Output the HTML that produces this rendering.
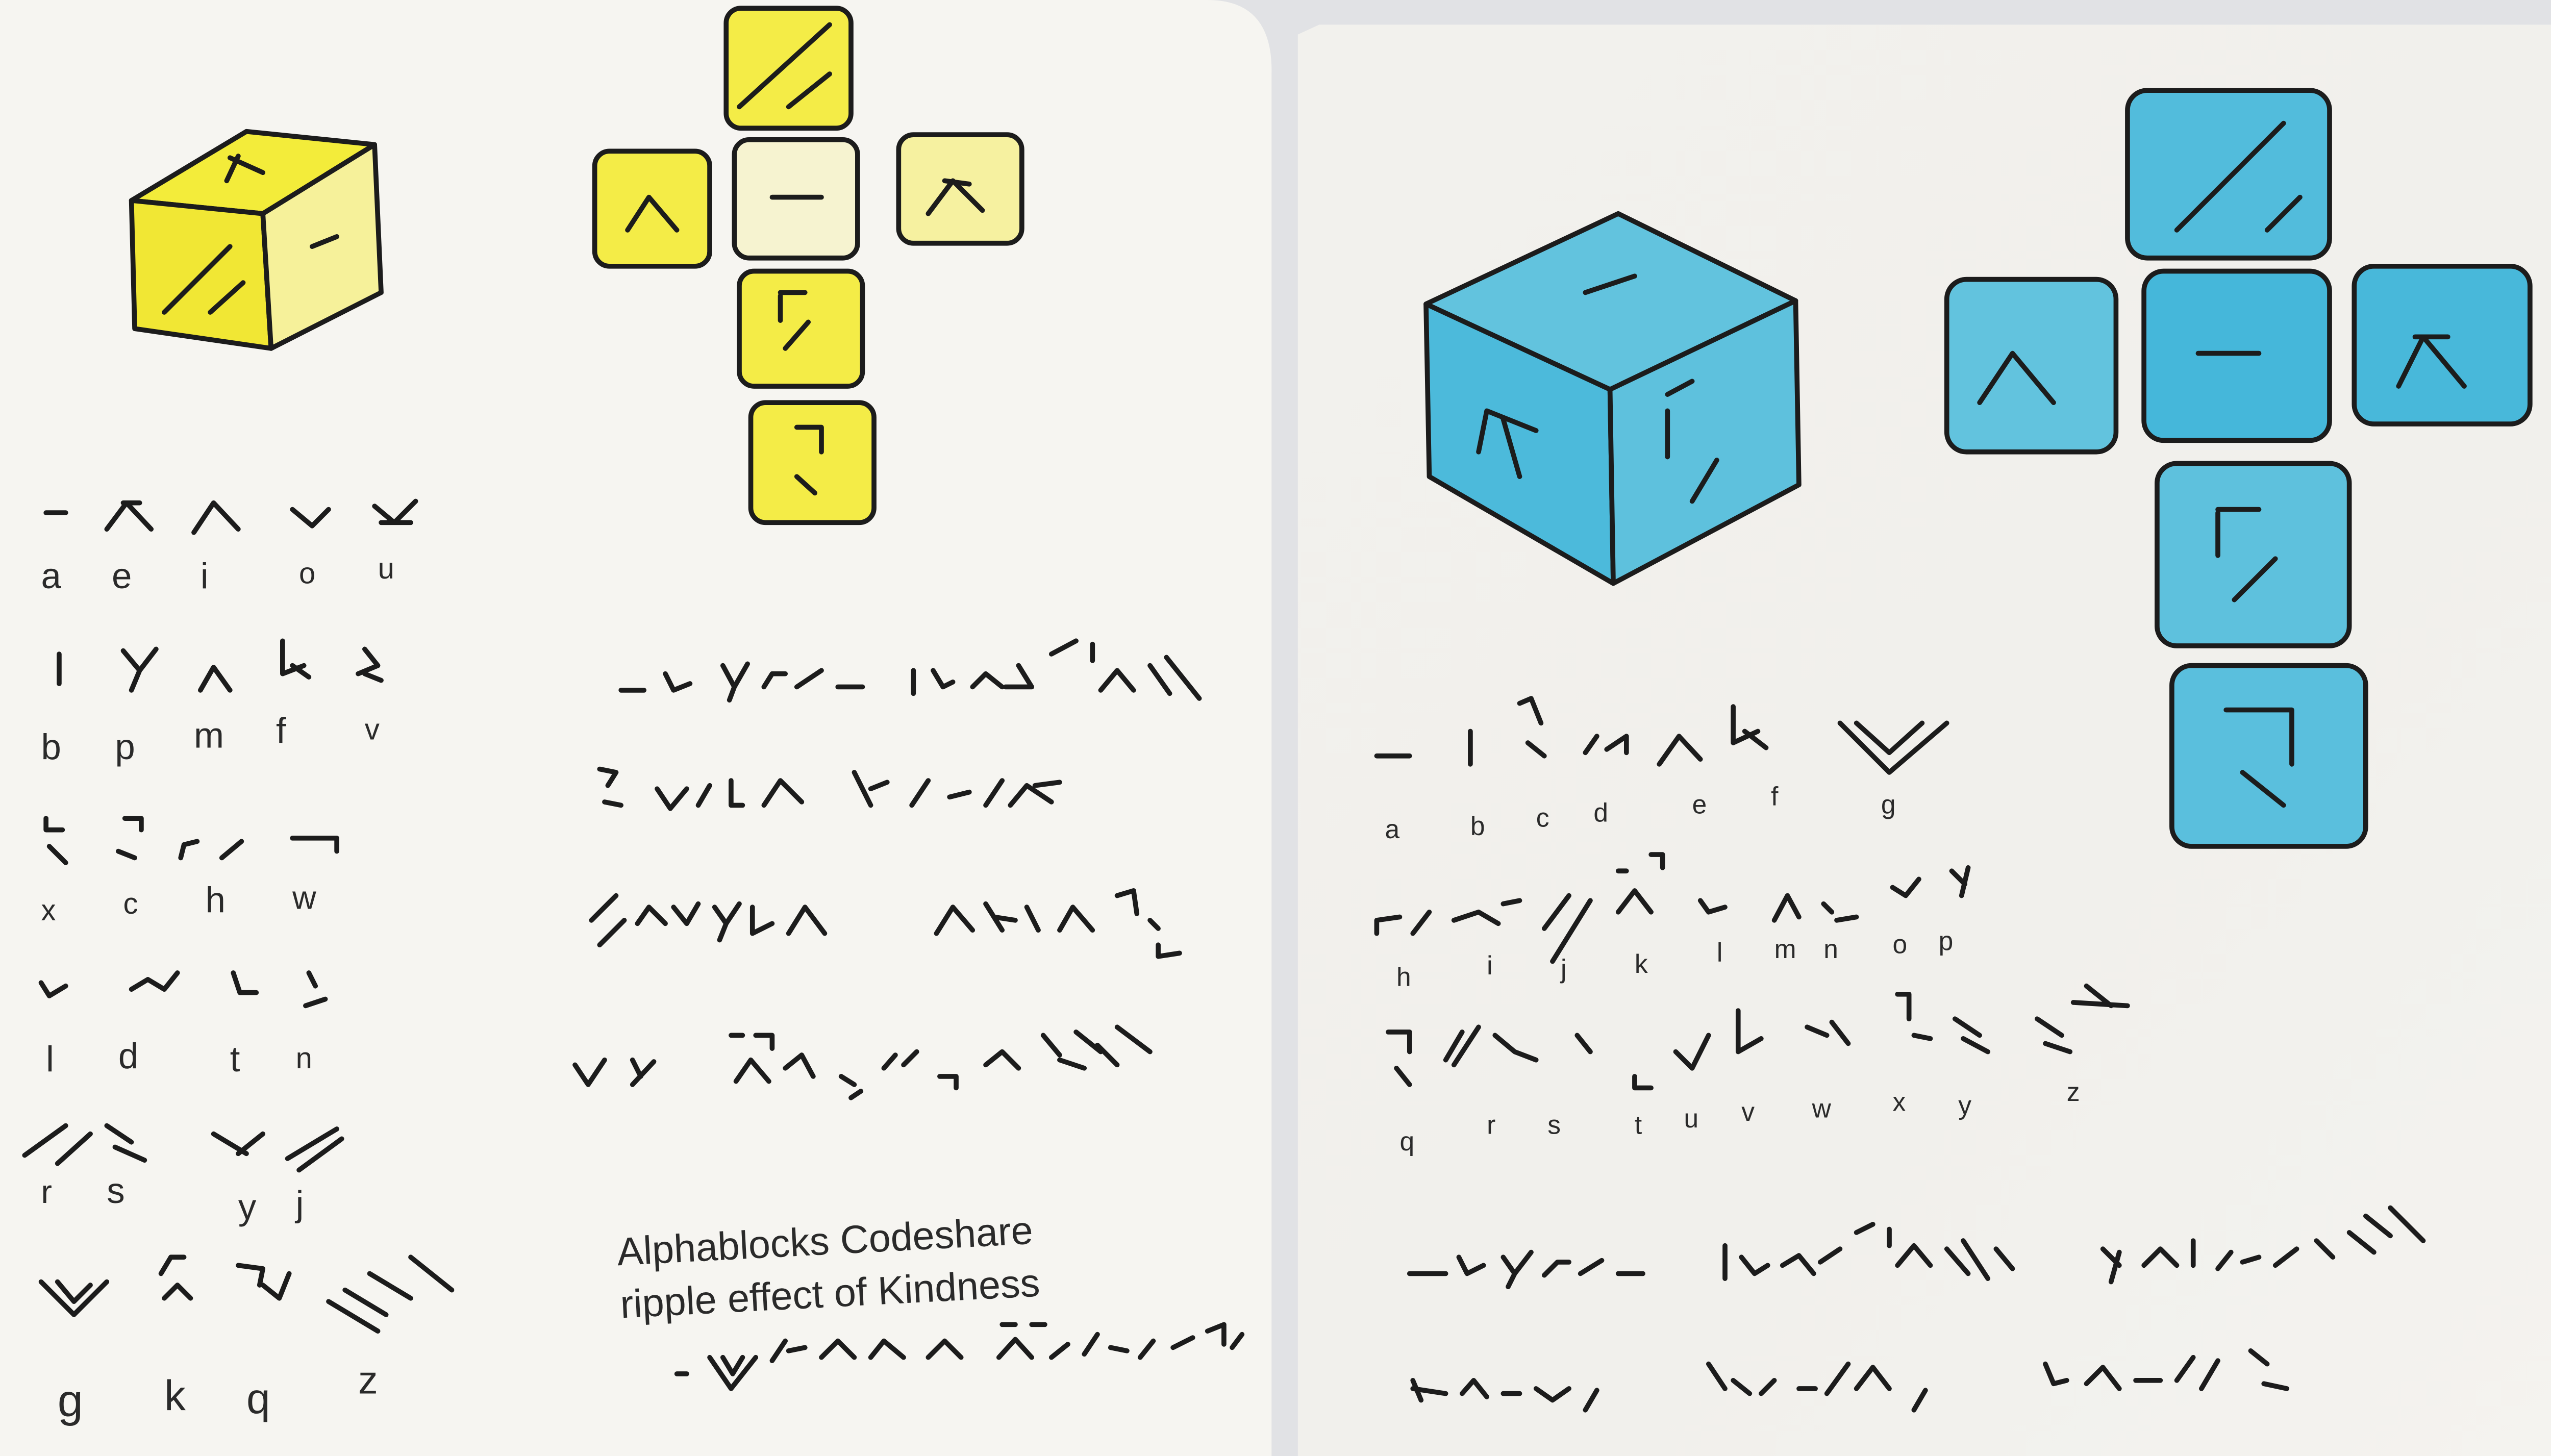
<!DOCTYPE html>
<html><head><meta charset="utf-8"><style>
html,body{margin:0;padding:0;background:#e1e2e5;}
svg{display:block;}
text{font-family:"Liberation Sans",sans-serif;fill:#2a2a2a;}
</style></head><body>
<svg width="5049" height="2854" viewBox="0 0 1568 886" preserveAspectRatio="none" xmlns="http://www.w3.org/2000/svg">
<defs>
<linearGradient id="rp" x1="0" y1="0" x2="1" y2="1">
<stop offset="0" stop-color="#f2f1ed"/><stop offset="0.6" stop-color="#f1f0ec"/><stop offset="1" stop-color="#f4f3ef"/></linearGradient>
</defs>
<rect width="1568" height="886" fill="#e1e2e5"/>
<path d="M0 0 H735 Q775 0 774 45 V886 H0 Z" fill="#f6f5f1"/>
<path d="M790 21 L803 15 H1568 V886 H790 Z" fill="url(#rp)"/>
<g stroke="#1c1c1c" stroke-width="3" stroke-linecap="round" stroke-linejoin="round" fill="none">
<path d="M80 122 L150 80 L228 88 L160 130 Z" fill="#f3ec3a"/>
<path d="M80 122 L160 130 L165 212 L82 200 Z" fill="#f1e734"/>
<path d="M160 130 L228 88 L232 178 L165 212 Z" fill="#f6f19a"/>
<path d="M145 95 L138 110 M140 96 L160 105 M100 190 L140 150 M128 190 L148 172 M190 150 L205 144"/>
<g fill="#f4ec47">
<rect x="442" y="5" width="76" height="73" rx="9"/>
<rect x="362" y="92" width="70" height="70" rx="9"/>
<rect x="447" y="85" width="75" height="72" rx="9" fill="#f6f3d0"/>
<rect x="547" y="82" width="75" height="66" rx="9" fill="#f6f1a0"/>
<rect x="450" y="165" width="75" height="70" rx="9"/>
<rect x="457" y="245" width="75" height="73" rx="9"/>
</g>
<path d="M450 65 L505 15 M480 65 L505 45 M382 140 L395 120 L412 140 M470 120 L500 120 M565 130 L580 110 L598 128 M575 110 L590 112 M475 180 V195 M475 178 H490 M478 212 L492 196 M485 260 H500 V275 M485 290 L496 300"/>
<path d="M868 185 L985 130 L1093 183 L980 237 Z" fill="#62c3de"/>
<path d="M868 185 L980 237 L982 355 L870 290 Z" fill="#4cbadb"/>
<path d="M980 237 L1093 183 L1095 295 L982 355 Z" fill="#5ec1dd"/>
<path d="M965 178 L995 168 M900 275 L905 250 L935 262 M915 255 L925 290 M1015 250 V278 M1015 240 L1030 232 M1030 305 L1045 280"/>
<g fill="#52bcdc">
<rect x="1295" y="55" width="123" height="102" rx="12"/>
<rect x="1185" y="170" width="103" height="105" rx="12" fill="#62c3de"/>
<rect x="1305" y="165" width="113" height="103" rx="12" fill="#45b7da"/>
<rect x="1433" y="162" width="107" height="96" rx="12" fill="#48b8da"/>
<rect x="1313" y="282" width="117" height="111" rx="12" fill="#5ec1dd"/>
<rect x="1322" y="405" width="118" height="110" rx="12" fill="#5abfdd"/>
</g>
<path d="M1325 140 L1390 75 M1380 140 L1400 120 M1205 245 L1225 215 L1250 245 M1338 215 H1375 M1460 235 L1475 205 L1500 235 M1470 205 H1490 M1350 312 V338 M1350 310 H1375 M1360 365 L1385 340 M1355 432 H1395 V465 M1365 470 L1390 490"/>
<path d="M28 312 H40 M65 322 L77 306 L92 322 M75 306 H85 M118 324 L130 306 L145 322 M178 310 L190 320 L200 310 M228 308 L240 318 L253 305 M232 318 H250"/>
<path d="M36 398 V416 M75 396 L85 408 L95 395 M85 408 L80 420 M122 420 L130 406 L140 420 M172 390 V410 L185 405 M178 405 L188 412 M222 395 L230 405 L218 410 M222 410 L232 414"/>
<path d="M28 498 V505 H38 M30 515 L40 525 M76 498 H86 V505 M72 518 L82 522 M110 522 L112 514 L120 512 M135 522 L147 512 M178 510 H205 V518"/>
<path d="M25 598 L30 606 L40 600 M80 602 L90 596 L100 602 L108 592 M142 592 L146 604 H156 M188 592 L192 600 M186 612 L198 608"/>
<path d="M15 703 L40 685 M35 708 L55 690 M65 685 L80 695 M70 698 L88 706 M130 690 L150 702 M145 702 L160 690 M175 705 L205 687 M182 712 L208 693"/>
<path d="M25 780 L45 800 L65 780 M35 780 L45 792 L55 782 M98 775 L104 765 H112 M100 790 L108 782 L116 790 M145 770 L160 772 L158 782 M160 782 L170 790 L176 775 M200 792 L230 810 M210 785 L235 800 M225 775 L250 790 M250 765 L275 785"/>
<path d="M378 420 H392 M405 410 L410 420 L420 416 M440 405 L447 418 L455 404 M447 418 L444 426 M465 418 L470 410 L478 410 M485 418 L500 408 M510 418 H525 M556 408 V422 M568 408 L574 418 L580 415 M592 418 L600 410 L610 418 M620 405 L628 418 L612 418 M640 398 L655 390 M665 392 V402 M670 420 L680 408 L690 420 M700 405 L712 422 M710 400 L730 425"/>
<path d="M365 468 L375 470 L370 478 M368 488 L378 490 M400 480 L408 492 L418 480 M425 490 L432 478 M445 475 V490 H452 M465 490 L475 475 L488 488 M520 470 L530 490 M530 480 L540 476 M555 490 L565 475 M578 485 L590 482 M600 490 L610 475 M615 490 L625 478 L640 488 M630 478 L645 476"/>
<path d="M360 560 L375 545 M365 575 L380 560 M388 562 L395 552 L405 562 M410 552 L418 562 L425 550 M435 552 L442 562 L450 550 M442 562 L438 572 M458 552 V568 L470 562 M480 568 L490 552 L502 568 M570 568 L580 552 L592 566 M600 550 L610 566 M605 558 L618 560 M625 552 L632 566 M645 566 L653 552 L665 566 M680 545 L690 542 L692 556 M700 560 L705 565 M705 575 V582 L718 580"/>
<path d="M350 648 L358 660 L368 645 M385 645 L390 655 M385 660 L398 646 M445 630 H452 M460 630 H470 V638 M448 658 L457 645 L468 658 M478 650 L488 642 L495 655 M512 655 L520 660 M518 668 L524 664 M538 650 L545 642 M550 648 L558 640 M572 655 H582 V662 M600 648 L610 640 L620 650 M635 630 L645 642 M645 645 L660 650 M655 628 L670 640 M668 636 L680 648 M680 625 L700 640"/>
<path d="M412 836 H418 M432 826 L445 845 L460 826 M440 826 L446 836 L452 826 M470 828 L478 816 M480 822 L490 820 M500 826 L510 816 L520 826 M530 826 L538 816 L550 826 M565 826 L575 816 L585 826 M610 806 H618 M628 806 H636 M608 826 L618 815 L628 826 M640 826 L650 818 M660 824 L668 812 M676 820 L686 822 M694 826 L702 816 M714 820 L726 814 M735 810 L745 806 V818 M750 820 L756 812"/>
<path d="M838 460 H858 M895 445 V465 M925 428 L932 425 L938 440 M930 452 L940 460 M965 458 L972 448 M978 456 L990 448 V458 M1010 465 L1022 448 L1035 462 M1055 430 V452 L1070 445 M1062 445 L1075 455 M1120 440 L1150 470 L1185 440 M1130 440 L1150 458 L1170 440"/>
<path d="M838 568 V560 L852 558 M860 568 L870 555 M885 560 L900 555 L912 562 M915 550 L925 548 M940 565 L955 545 M945 585 L968 548 M985 530 H990 M1005 520 H1012 V528 M985 555 L995 542 L1005 555 M1035 548 L1040 555 L1050 552 M1080 560 L1088 545 L1095 558 M1110 550 L1115 555 M1118 560 L1130 558 M1152 540 L1160 545 L1168 535 M1188 530 L1196 538 M1198 528 L1194 545"/>
<path d="M845 628 H858 V640 M850 650 L858 660 M880 645 L890 628 M885 648 L900 625 M910 630 L922 640 M922 640 L935 645 M960 630 L968 640 M995 655 V662 H1005 M1020 640 L1030 650 L1040 630 M1058 615 V640 L1072 632 M1100 625 L1112 630 M1115 622 L1125 635 M1155 605 H1162 V620 M1165 630 L1175 632 M1190 620 L1205 630 M1195 632 L1210 640 M1240 620 L1255 630 M1245 635 L1260 640 M1270 600 L1285 612 M1262 610 L1295 612"/>
<path d="M858 775 H880 M888 765 L893 775 L903 770 M915 765 L922 775 L932 762 M922 775 L918 783 M940 776 L948 768 L955 768 M962 775 L975 767 M985 775 H1000 M1050 758 V778 M1060 765 L1068 775 L1076 770 M1085 770 L1095 764 L1104 775 M1108 768 L1120 760 M1130 750 L1140 745 M1150 748 V758 M1155 770 L1165 758 L1175 770 M1185 760 L1198 775 M1195 755 L1210 778 M1215 760 L1225 772 M1280 760 L1290 770 M1290 762 L1285 780 M1305 770 L1315 760 L1325 770 M1335 755 V770 M1350 772 L1358 762 M1365 768 L1375 765 M1385 770 L1398 760 M1410 755 L1420 765 M1430 750 L1445 762 M1440 740 L1455 752 M1455 735 L1475 755"/>
<path d="M860 840 L865 852 M860 845 L880 848 M890 848 L897 840 L905 850 M915 848 H925 M935 845 L945 852 L955 845 M965 858 L972 846 M1040 830 L1050 845 M1055 840 L1065 848 M1072 848 L1080 840 M1095 845 H1105 M1112 848 L1125 830 M1130 845 L1140 832 L1150 845 M1165 858 L1172 846 M1245 830 L1250 842 L1258 840 M1270 842 L1280 832 L1290 845 M1300 840 H1315 M1325 840 L1335 826 M1340 845 L1350 828 M1370 822 L1380 830 M1378 842 L1392 845"/>
</g>
<g font-size="22">
<text x="25" y="358">a</text><text x="68" y="358">e</text><text x="122" y="358">i</text><text x="182" y="355" font-size="18">o</text><text x="230" y="352" font-size="18">u</text>
<text x="25" y="462">b</text><text x="70" y="462">p</text><text x="118" y="455">m</text><text x="168" y="452">f</text><text x="222" y="450" font-size="18">v</text>
<text x="25" y="560" font-size="18">x</text><text x="75" y="556" font-size="18">c</text><text x="125" y="555">h</text><text x="178" y="553" font-size="20">w</text>
<text x="28" y="652">l</text><text x="72" y="650">d</text><text x="140" y="652">t</text><text x="180" y="650" font-size="18">n</text>
<text x="25" y="732" font-size="20">r</text><text x="65" y="732">s</text><text x="145" y="742">y</text><text x="180" y="740">j</text>
<text x="35" y="862" font-size="28">g</text><text x="100" y="858" font-size="26">k</text><text x="150" y="860" font-size="26">q</text><text x="218" y="848" font-size="24">z</text>
<text x="376" y="770" font-size="24" transform="rotate(-3 376 770)">Alphablocks Codeshare</text>
<text x="378" y="802" font-size="24" transform="rotate(-3 378 802)">ripple effect of Kindness</text>
</g>
<g font-size="16">
<text x="843" y="510">a</text><text x="895" y="508">b</text><text x="935" y="503">c</text><text x="970" y="500">d</text><text x="1030" y="495">e</text><text x="1078" y="490">f</text><text x="1145" y="495">g</text>
<text x="850" y="600">h</text><text x="905" y="593">i</text><text x="950" y="595">j</text><text x="995" y="592">k</text><text x="1045" y="585">l</text><text x="1080" y="583">m</text><text x="1110" y="583">n</text><text x="1152" y="580">o</text><text x="1180" y="578">p</text>
<text x="852" y="700">q</text><text x="905" y="690">r</text><text x="942" y="690">s</text><text x="995" y="690">t</text><text x="1025" y="686">u</text><text x="1060" y="682">v</text><text x="1103" y="680">w</text><text x="1152" y="676">x</text><text x="1192" y="678">y</text><text x="1258" y="670">z</text>
</g>
</svg>
</body></html>
